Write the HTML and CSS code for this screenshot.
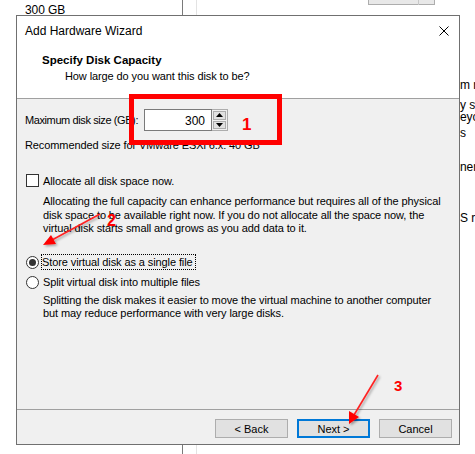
FILE: index.html
```html
<!DOCTYPE html>
<html lang="en">
<head>
  <meta charset="UTF-8"/>
  <title>Add Hardware Wizard</title>
  <link rel="stylesheet" href="styles.css">
</head>
<body>
  <!-- ===== app behind the wizard ===== -->
  <div class="desk">
    <div class="desk-size">300 GB</div>
    <div class="desk-rule"></div>
    <div class="desk-rule light"></div>
    <div class="desk-btn"><span></span></div>
    <div class="desk-side">
      <p class="l1">m re</p>
      <p class="l2">y sw</p>
      <p class="l3">eyo</p>
      <p class="l4">s</p>
      <p class="l5">nen</p>
      <p class="l6">S r</p>
    </div>
  </div>

  <!-- ===== wizard ===== -->
  <div class="dialog">
    <div class="titlebar">
      <span>Add Hardware Wizard</span>
      <svg class="close" viewBox="0 0 10 10"><path d="M0.5 0.5L9.5 9.5M9.5 0.5L0.5 9.5"/></svg>
    </div>
    <div class="header">
      <h1>Specify Disk Capacity</h1>
      <p>How large do you want this disk to be?</p>
    </div>
    <div class="content">
      <div class="size-row">
        <label>Maximum disk size (GB):</label>
        <div class="spin">
          <div class="spin-val">300</div>
          <div class="spin-btns">
            <div class="spin-btn"><svg viewBox="0 0 7 4"><path d="M3.5 0L7 4H0Z"/></svg></div>
            <div class="spin-btn"><svg viewBox="0 0 7 4"><path d="M0 0H7L3.5 4Z"/></svg></div>
          </div>
        </div>
      </div>
      <div class="recommend">Recommended size for VMware ESXi 6.x: 40 GB</div>

      <div class="opt check-row"><span class="checkbox"></span><span>Allocate all disk space now.</span></div>
      <p class="desc">Allocating the full capacity can enhance performance but requires all of the physical<br>disk space to be available right now. If you do not allocate all the space now, the<br>virtual disk starts small and grows as you add data to it.</p>

      <div class="opt radio-row first"><span class="radio on"></span><span class="focus">Store virtual disk as a single file</span></div>
      <div class="opt radio-row"><span class="radio"></span><span>Split virtual disk into multiple files</span></div>
      <p class="desc tight">Splitting the disk makes it easier to move the virtual machine to another computer<br>but may reduce performance with very large disks.</p>
    </div>
    <div class="footer">
      <button class="btn">&lt; Back</button>
      <button class="btn default">Next &gt;</button>
      <button class="btn">Cancel</button>
    </div>
  </div>

  <!-- ===== annotations ===== -->
  <div class="mark-box"></div>
  <span class="mark-num n1">1</span>
  <span class="mark-num n2">2</span>
  <span class="mark-num n3">3</span>
  <svg class="arrows" viewBox="0 0 475 454">
    <defs>
      <filter id="sh" x="-20%" y="-20%" width="140%" height="140%">
        <feDropShadow dx="1.5" dy="1.5" stdDeviation="1.2" flood-color="#000" flood-opacity="0.35"/>
      </filter>
    </defs>
    <g filter="url(#sh)">
      <line x1="100" y1="214" x2="52" y2="240" stroke="#f22" stroke-width="1.6"/>
      <path d="M43 245L51 235L56 244Z" fill="#f00"/>
      <line x1="378" y1="375" x2="354" y2="415" stroke="#f22" stroke-width="1.6"/>
      <path d="M349 424L349 411L359 417Z" fill="#f00"/>
    </g>
  </svg>
</body>
</html>
```

FILE: styles.css
```css
/* ===== Global ===== */
* { margin:0; padding:0; box-sizing:border-box; }
body {
  width:475px; height:454px; overflow:hidden; position:relative;
  background:#fff; color:#000;
  font-family:'Liberation Sans',Arial,sans-serif; font-size:11px; letter-spacing:-0.1px;
}

/* ===== Background app ===== */
.desk-size{position:absolute;left:25px;top:3px;font-size:12px;}
.desk-rule{position:absolute;left:182px;top:0;width:1px;height:454px;background:#7a7a7a;}
.desk-rule.light{left:196px;background:#e3e3e3;}
.desk-btn{position:absolute;left:368px;top:-10px;width:67px;height:15px;border:1px solid #adadad;background:#e8e8e8;}
.desk-btn span{position:absolute;left:49px;top:0;width:1px;height:14px;background:#c8c8c8;}
.desk-side{position:absolute;left:460px;top:79px;width:15px;overflow:hidden;font-size:12px;white-space:nowrap;}
.desk-side p{line-height:12px;}
.desk-side .l2{margin-top:8px;}
.desk-side .l4{margin-top:4px;}
.desk-side .l5{margin-top:22px;}
.desk-side .l6{margin-top:39px;}

/* ===== Dialog ===== */
.dialog{
  position:absolute;left:16px;top:15px;width:444px;height:430px;
  display:flex;flex-direction:column;
  background:#fff;border:1px solid #707070;
}
.titlebar{height:29px;display:flex;align-items:center;justify-content:space-between;padding:0 10px 0 8px;font-size:12px;letter-spacing:0;}
.close{width:10px;height:10px;stroke:#000;stroke-width:1;fill:none;}
.header{height:54px;padding:8px 0 0 25px;border-bottom:1px solid #a0a0a0;}
.header h1{font-size:11.5px;font-weight:700;line-height:14px;letter-spacing:0;}
.header p{padding-left:23px;line-height:14px;margin-top:2px;}

.content{flex:1;background:#f0f0f0;padding:10px 0 0 8px;}
.size-row{display:flex;align-items:center;height:22px;}
.size-row label{flex:none;width:119px;white-space:nowrap;letter-spacing:-0.4px;}
.spin{display:flex;height:22px;}
.spin-val{width:68px;height:22px;border:1px solid #7a7a7a;background:#fff;text-align:right;padding:4px 6px 0 0;font-size:12px;letter-spacing:0;}
.spin-btns{display:flex;flex-direction:column;justify-content:center;gap:1px;width:16px;height:22px;border:1px solid #adadad;border-left:none;background:#f0f0f0;padding:1px;}
.spin-btn{flex:1;display:flex;align-items:center;justify-content:center;background:#e1e1e1;border:1px solid #adadad;}
.spin-btn svg{width:7px;height:4px;fill:#000;}
.recommend{margin-top:7px;line-height:14px;}

.opt{display:flex;align-items:center;gap:4px;height:17px;padding-left:1px;}
.check-row{margin-top:20px;}
.checkbox{width:13px;height:13px;border:1px solid #333;background:#fff;}
.radio{width:13px;height:13px;border:1px solid #333;border-radius:50%;background:#fff;display:flex;align-items:center;justify-content:center;}
.radio.on::after{content:"";width:7px;height:7px;border-radius:50%;background:#333;}
.radio-row.first{margin-top:18px;}
.radio-row{margin-top:3px;}
.focus{outline:1px dotted #000;outline-offset:0;padding:1px 2px 1px 0;margin-left:-1px;}
.desc{padding-left:18px;line-height:13.5px;margin-top:6px;}
.desc.tight{margin-top:3px;}

.footer{height:35px;border-top:1px solid #a0a0a0;background:#f0f0f0;display:flex;justify-content:flex-end;gap:9px;padding:9px 7px 0 0;}
.btn{width:73px;height:19px;background:#e1e1e1;border:1px solid #adadad;font-family:inherit;font-size:11px;color:#000;}
.btn.default{border:2px solid #0078d7;}

/* ===== Annotations ===== */
.mark-box{position:absolute;left:129px;top:94px;width:153px;height:51px;border:5px solid #f00;}
.mark-num{position:absolute;color:#f00;font-weight:700;font-family:'Liberation Sans',Arial,sans-serif;line-height:1;letter-spacing:0;}
.n1{left:242px;top:116px;font-size:17px;}
.n2{left:107px;top:213px;font-size:16px;}
.n3{left:394px;top:378px;font-size:15px;}
.arrows{position:absolute;left:0;top:0;width:475px;height:454px;pointer-events:none;}
```
